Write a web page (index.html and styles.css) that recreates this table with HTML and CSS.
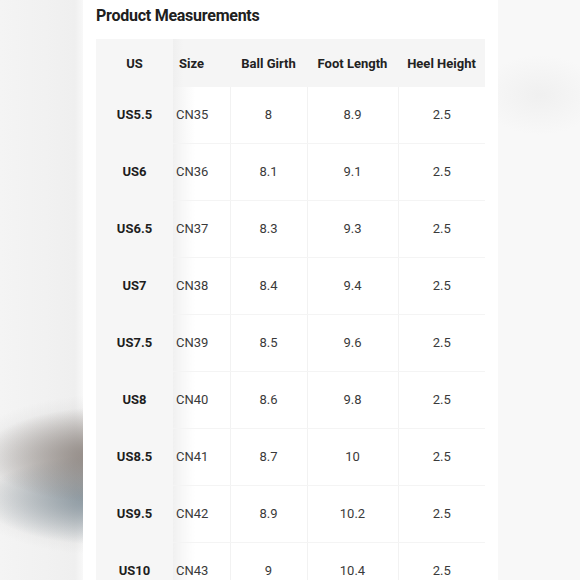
FILE: index.html
```html
<!DOCTYPE html>
<html lang="en">
<head>
<meta charset="utf-8">
<title>Product Measurements</title>
<link rel="stylesheet" href="styles.css">
</head>
<body>
<div class="page">
  <main class="card">
    <h2 class="title">Product Measurements</h2>
    <table class="measure">
      <colgroup>
        <col class="c-us"><col class="c-size"><col class="c-ball"><col class="c-foot"><col class="c-heel">
      </colgroup>
      <thead>
        <tr>
          <th class="us">US</th>
          <th class="size">Size</th>
          <th>Ball Girth</th>
          <th>Foot Length</th>
          <th>Heel Height</th>
        </tr>
      </thead>
      <tbody>
        <tr><td class="us">US5.5</td><td class="size">CN35</td><td>8</td><td>8.9</td><td>2.5</td></tr>
        <tr><td class="us">US6</td><td class="size">CN36</td><td>8.1</td><td>9.1</td><td>2.5</td></tr>
        <tr><td class="us">US6.5</td><td class="size">CN37</td><td>8.3</td><td>9.3</td><td>2.5</td></tr>
        <tr><td class="us">US7</td><td class="size">CN38</td><td>8.4</td><td>9.4</td><td>2.5</td></tr>
        <tr><td class="us">US7.5</td><td class="size">CN39</td><td>8.5</td><td>9.6</td><td>2.5</td></tr>
        <tr><td class="us">US8</td><td class="size">CN40</td><td>8.6</td><td>9.8</td><td>2.5</td></tr>
        <tr><td class="us">US8.5</td><td class="size">CN41</td><td>8.7</td><td>10</td><td>2.5</td></tr>
        <tr><td class="us">US9.5</td><td class="size">CN42</td><td>8.9</td><td>10.2</td><td>2.5</td></tr>
        <tr><td class="us">US10</td><td class="size">CN43</td><td>9</td><td>10.4</td><td>2.5</td></tr>
      </tbody>
    </table>
  </main>
</div>
</body>
</html>
```

FILE: styles.css
```css
html, body {
  margin: 0;
  padding: 0;
  height: 100%;
  overflow: hidden;
}

body {
  font-family: Roboto, "Liberation Sans", Arial, sans-serif;
  background-color: #f6f6f6;
  background-image:
    radial-gradient(ellipse 125px 48px at 108px 455px, rgba(128, 118, 112, 0.9), rgba(128, 118, 112, 0) 100%),
    radial-gradient(ellipse 125px 45px at 108px 500px, rgba(112, 130, 142, 0.85), rgba(112, 130, 142, 0) 100%),
    radial-gradient(ellipse 150px 80px at 100px 475px, rgba(165, 163, 161, 0.55), rgba(165, 163, 161, 0) 100%),
    radial-gradient(ellipse 60px 40px at 540px 95px, rgba(215, 215, 215, 0.25), rgba(215, 215, 215, 0) 100%),
    linear-gradient(to right, #f4f4f4 0, #efefef 75px, #f8f8f8 83px, #f8f8f8 100%);
}

.page {
  display: flex;
  height: 100%;
}

.card {
  margin-left: 83px;
  width: 389px;
  padding: 6px 13px 0;
  background: #ffffff;
  height: 100%;
  overflow: hidden;
}

.title {
  margin: 0 0 13px;
  font-size: 16px;
  line-height: 20px;
  font-weight: 700;
  color: #202020;
  letter-spacing: -0.25px;
}

.measure {
  width: 389px;
  border-collapse: collapse;
  table-layout: fixed;
  font-size: 13px;
}

.c-us { width: 77px; }
.c-size { width: 57px; }
.c-ball { width: 77px; }
.c-foot { width: 91px; }
.c-heel { width: 87px; }

.measure th {
  height: 48px;
  padding: 0;
  background: #f5f5f5;
  color: #222222;
  font-weight: 700;
  text-align: center;
  white-space: nowrap;
}

.measure td {
  height: 54px;
  padding: 0 0 2px;
  color: #3a3a3a;
  text-align: center;
  border-bottom: 1px solid #f4f4f4;
  border-left: 1px solid #f2f2f2;
}

.measure td.us {
  background: #f6f6f6;
  color: #1e1e1e;
  font-weight: 700;
  border-left: none;
  border-bottom-color: #f6f6f6;
}

.measure td.size {
  text-align: left;
  padding-left: 3px;
  border-left: none;
  background: linear-gradient(to right, #f0f0f0 0, #f7f7f7 9px, #ffffff 22px);
}

.measure th.size {
  text-align: left;
  padding-left: 6px;
  background: linear-gradient(to right, #efefef 0, #f5f5f5 10px);
}

.measure th.us {
  background: #f6f6f6;
}
```
